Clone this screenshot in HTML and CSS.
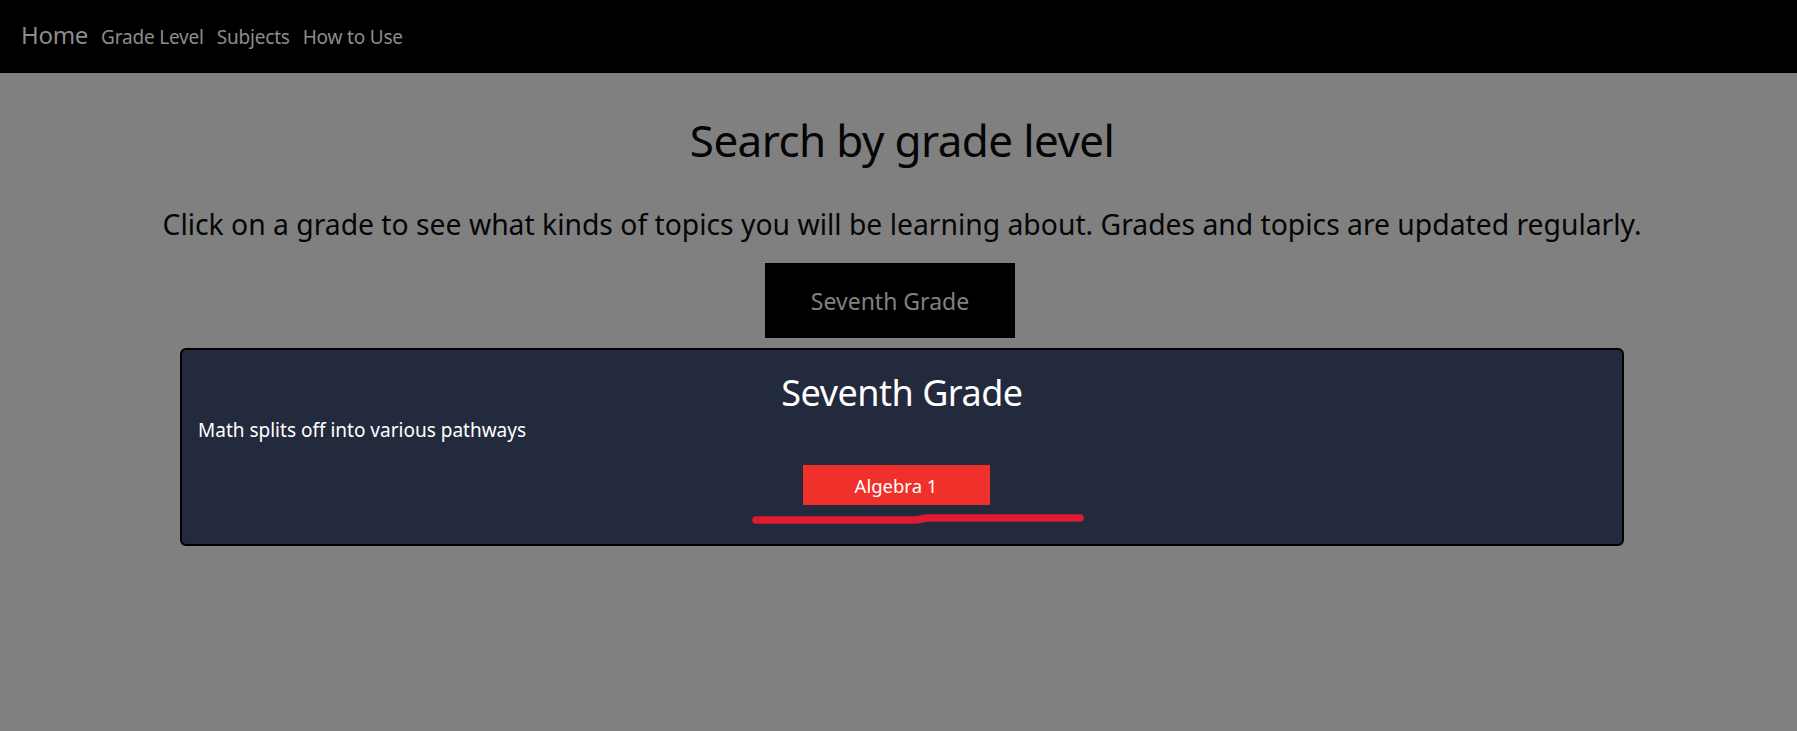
FILE: index.html
```html
<!DOCTYPE html>
<html lang="en">
<head>
<meta charset="utf-8">
<title>Search by grade level</title>
<link rel="stylesheet" href="styles.css">
</head>
<body>
<nav class="navbar">
  <a class="brand" href="#">Home</a>
  <a class="nav-link" href="#">Grade Level</a>
  <a class="nav-link" href="#">Subjects</a>
  <a class="nav-link" href="#">How to Use</a>
</nav>
<main class="main">
  <h1 class="title">Search by grade level</h1>
  <p class="lead">Click on a grade to see what kinds of topics you will be learning about. Grades and topics are updated regularly.</p>
  <div class="grade-row">
    <button class="grade-btn">Seventh Grade</button>
  </div>
  <section class="card">
    <h2 class="card-title">Seventh Grade</h2>
    <p class="card-text">Math splits off into various pathways</p>
    <div class="topic-row">
      <button class="topic-btn">Algebra 1</button>
    </div>
    <div class="underline-row">
      <svg class="underline" width="340" height="12" viewBox="0 0 340 12">
        <path d="M4 8 L164 8 C168 8 170 6 176 6 L328 6" fill="none" stroke="#e01a2f" stroke-width="7.5" stroke-linecap="round"/>
      </svg>
    </div>
  </section>
</main>
</body>
</html>
```

FILE: styles.css
```css
* { box-sizing: border-box; }
html, body { margin: 0; padding: 0; }
body {
  background: #808080;
  font-family: "Noto Sans", "Open Sans", sans-serif;
  color: #000;
  min-height: 731px;
}
.navbar {
  height: 73px;
  background: #000;
  display: flex;
  align-items: baseline;
  padding: 16px 0 0 21px;
  gap: 13px;
}
.brand {
  color: #8c8c8c;
  text-decoration: none;
  font-size: 24px;
  letter-spacing: -0.3px;
  line-height: 38px;
}
.nav-link {
  color: #8c8c8c;
  text-decoration: none;
  font-size: 19px;
  letter-spacing: -0.2px;
  line-height: 38px;
}
.main {
  padding-left: 7px;
  text-align: center;
}
.title {
  margin: 0;
  padding-top: 37px;
  font-size: 44px;
  letter-spacing: -0.6px;
  font-weight: 400;
  line-height: 60px;
  color: #050505;
}
.lead {
  margin: 34px 0 0;
  font-size: 28.3px;
  line-height: 40px;
  color: #050505;
}
.grade-row {
  display: flex;
  justify-content: center;
  margin-top: 19px;
}
.grade-btn {
  width: 250px;
  height: 75px;
  margin-right: 24px;
  background: #000;
  border: 0;
  color: #808080;
  font-family: inherit;
  font-size: 23px;
  padding: 0;
}
.card {
  width: 1444px;
  margin: 10px auto 0;
  background: #232a3e;
  border: 2px solid #000;
  border-radius: 6px;
  padding: 20px 16px 20px;
  color: #fff;
  text-align: left;
}
.card-title {
  margin: 0;
  text-align: center;
  font-size: 36px;
  letter-spacing: -0.5px;
  font-weight: 400;
  line-height: 46px;
}
.card-text {
  margin: 0;
  font-size: 19px;
  line-height: 28px;
}
.topic-row {
  display: flex;
  justify-content: center;
  margin-top: 21px;
}
.topic-btn {
  width: 187px;
  height: 40px;
  margin-right: 12px;
  background: #f0302a;
  border: 0;
  color: #fff;
  font-family: inherit;
  font-size: 18.5px;
  padding: 0;
}
.underline-row {
  display: flex;
  justify-content: center;
  margin-top: 7px;
}
.underline {
  display: block;
  margin-left: 39px;
}
```
